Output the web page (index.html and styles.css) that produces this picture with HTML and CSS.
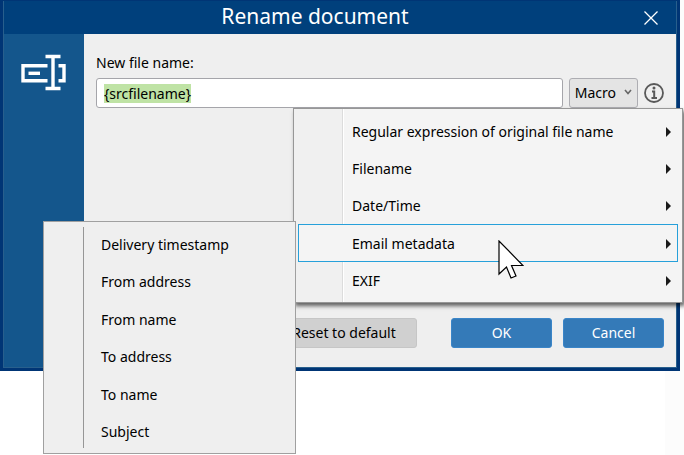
FILE: index.html
```html
<!DOCTYPE html>
<html lang="en">
<head>
    <meta charset="UTF-8">
    <meta name="viewport" content="width=device-width, initial-scale=1.0">
    <title>Rename document</title>
    <link rel="stylesheet" href="styles.css">
</head>
<body>
    <div class="dialog" role="dialog" aria-labelledby="dialogTitle">
        <header class="title-bar">
            <h1 id="dialogTitle">Rename document</h1>
            <button type="button" class="close-button" aria-label="Close">
                <svg width="14" height="14" viewBox="0 0 14 14" fill="none" stroke="#fff" stroke-width="1.3">
                    <path d="M0.5 0.5 13.5 13.5M13.5 0.5 0.5 13.5"/>
                </svg>
            </button>
        </header>

        <div class="dialog-body">
            <aside class="sidebar">
                <svg width="46" height="37" viewBox="0 0 46 37" fill="none" stroke="#fff" stroke-width="3.4">
                    <path d="M26.500 11.700H2V26.800H26.500"/>
                    <path d="M7.500 19.300H19"/>
                    <path d="M32 2V35"/>
                    <path d="M24.500 2.500H39.500M24.500 34.500H39.500"/>
                    <path d="M37.500 11.700H43V26.800H37.500"/>
                </svg>
            </aside>

            <form class="content">
                <label for="fileName">New file name:</label>
                <div class="field-row">
                    <input type="text" id="fileName" class="file-name" value="{srcfilename}" autocomplete="off" spellcheck="false">
                    <div class="macro">
                        <button type="button" class="macro-button" aria-haspopup="menu" aria-expanded="true">
                            Macro
                            <svg width="8" height="10" viewBox="0 0 8 10" fill="none" stroke="#666" stroke-width="1.6">
                                <path d="M1 2 4 5.500 7 2"/>
                            </svg>
                        </button>
                        <div class="menu" role="menu">
                            <button type="button" class="menu-item has-submenu" role="menuitem">Regular expression of original file name</button>
                            <button type="button" class="menu-item has-submenu" role="menuitem">Filename</button>
                            <button type="button" class="menu-item has-submenu" role="menuitem">Date/Time</button>
                            <div class="menu-group">
                                <button type="button" class="menu-item has-submenu active" role="menuitem" aria-expanded="true">Email metadata</button>
                                <div class="submenu" role="menu">
                                    <button type="button" class="menu-item" role="menuitem">Delivery timestamp</button>
                                    <button type="button" class="menu-item" role="menuitem">From address</button>
                                    <button type="button" class="menu-item" role="menuitem">From name</button>
                                    <button type="button" class="menu-item" role="menuitem">To address</button>
                                    <button type="button" class="menu-item" role="menuitem">To name</button>
                                    <button type="button" class="menu-item" role="menuitem">Subject</button>
                                </div>
                                <svg class="pointer" width="26" height="39" viewBox="0 0 26 39" fill="#fff" stroke="#000" stroke-width="1.200">
                                    <path d="M1 1V34L8.500 27 13 38 18 36 13.500 25.500H25Z"/>
                                </svg>
                            </div>
                            <button type="button" class="menu-item has-submenu" role="menuitem">EXIF</button>
                        </div>
                    </div>
                    <button type="button" class="info-button" aria-label="Info">
                        <svg width="20" height="20" viewBox="0 0 20 20" fill="none" stroke="#595959">
                            <circle cx="10" cy="10" r="9" stroke-width="1.800"/>
                            <path d="M8 8.500H10.200V15M7.500 15H13" stroke-width="2"/>
                            <circle cx="10" cy="5" r="1.500" fill="#595959" stroke="none"/>
                        </svg>
                    </button>
                </div>
                <div class="buttons">
                    <button type="reset" class="button reset">Reset to default</button>
                    <button type="submit" class="button primary">OK</button>
                    <button type="button" class="button primary">Cancel</button>
                </div>
            </form>
        </div>
    </div>

    <script>
        const fileName = document.getElementById('fileName');
        fileName.focus();
        fileName.select();
    </script>
</body>
</html>
```
FILE: styles.css
```css
* {
    box-sizing: border-box;
}
body {
    margin: 0;
    min-height: 100vh;
    padding-right: 4px;
    background: linear-gradient(#fcfcfc, #fcfcfc) right / 19px 100% no-repeat #fff;
    font-family: "Noto Sans", "Open Sans", sans-serif;
    font-size: 14px;
    line-height: 20px;
    color: #000;
}
button, input {
    font: inherit;
    color: inherit;
}
button {
    padding: 0;
    border: none;
    background: none;
}
svg {
    display: block;
}
.dialog {
    padding: 0 1px 1px;
    border: 3px solid #003575;
    border-top-width: 1px;
    background-color: #285f8c;
}
.title-bar {
    display: grid;
    grid-template-columns: 50px 1fr 50px;
    height: 33px;
    background-color: #00407c;
    color: #fff;
}
.title-bar h1 {
    grid-column: 2;
    margin: 0;
    padding-right: 50px;
    font-size: 21px;
    line-height: 30px;
    font-weight: normal;
    text-align: center;
}
.close-button {
    display: flex;
    justify-content: center;
    align-items: center;
}
.dialog-body {
    display: flex;
}
.sidebar {
    flex: 0 0 80px;
    display: flex;
    justify-content: center;
    align-items: flex-start;
    padding-top: 20px;
    background-color: #14568c;
}
.content {
    flex: 1;
    padding: 19px 12px;
    background-color: #efefef;
}
.content label {
    display: block;
}
.field-row {
    display: flex;
    align-items: center;
    gap: 6px;
    margin-top: 5px;
}
.file-name {
    flex: 1;
    min-width: 0;
    height: 30px;
    padding: 0 7px;
    border: 1px solid #a5a5aa;
    border-radius: 3px;
    background-color: #fff;
    outline: none;
}
.file-name::selection {
    background-color: #bfe3a5;
    color: #000;
}
.macro {
    position: relative;
}
.macro-button {
    display: flex;
    align-items: center;
    gap: 8px;
    height: 30px;
    padding: 0 5px;
    border: 1px solid #adadb2;
    border-radius: 3px;
    background-color: #e4e4e4;
}
.info-button {
    flex: none;
}
.menu {
    position: absolute;
    top: 100%;
    right: -45px;
    z-index: 1;
    display: grid;
    grid-auto-rows: 1fr;
    width: 390px;
    min-height: 195px;
    padding: 3px 4px;
    border: 1px solid #979797;
    background: linear-gradient(to right, #f0f0f0 48px, #dcdcdc 48px, #dcdcdc 49px, #fff 49px, #fff 50px, #f4f4f4 50px);
    box-shadow: 2px 3px 4px rgba(0, 0, 0, 0.6);
}
.menu-group {
    position: relative;
    display: grid;
}
.menu-item {
    display: flex;
    align-items: center;
    justify-content: space-between;
    padding: 2px 6px 0 53px;
    border: 1px solid transparent;
    text-align: left;
    white-space: nowrap;
}
.menu-item.active {
    border-color: #26a0da;
    background-color: #f4f4f4;
}
.has-submenu::after {
    content: "";
    border: 5px solid transparent;
    border-left-color: #1a1a1a;
    border-right-width: 0;
}
.submenu {
    position: absolute;
    top: -3px;
    right: calc(100% + 2px);
    display: grid;
    grid-auto-rows: 1fr;
    width: 253px;
    min-height: 233px;
    padding: 3px 4px;
    border: 1px solid #a0a0a0;
    background: linear-gradient(#969696, #969696) 39px center / 1px calc(100% - 10px) no-repeat #efefef;
}
.submenu .menu-item {
    padding-left: 52px;
}
.pointer {
    position: absolute;
    top: 16px;
    left: 200px;
}
.buttons {
    display: flex;
    justify-content: flex-end;
    gap: 11px;
    margin-top: 210px;
}
.button {
    width: 101px;
    height: 30px;
    border: 1px solid #3a85c8;
    border-radius: 3px;
}
.primary {
    background-color: #347ab8;
    color: #fff;
}
.reset {
    width: 146px;
    margin-right: 23px;
    border-color: #c6c6c6;
    background-color: #d0d0d0;
}
```
